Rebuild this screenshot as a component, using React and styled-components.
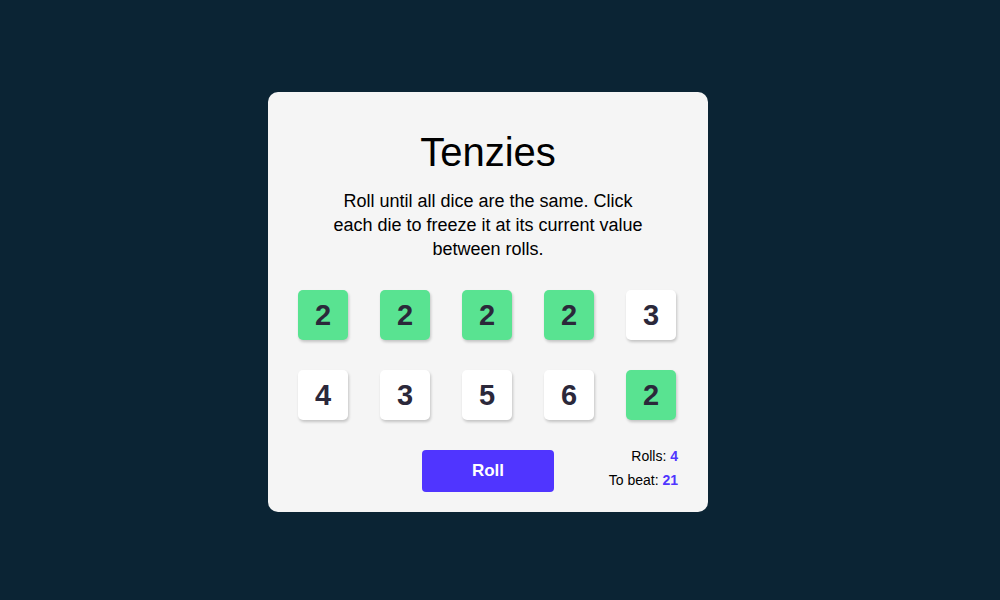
import React from "react";
import styled, { createGlobalStyle } from "styled-components";

const Global = createGlobalStyle`
  html, body { margin: 0; padding: 0; }
  body {
    background: #0b2434;
    font-family: "Liberation Sans", Arial, sans-serif;
  }
`;

const Page = styled.div`
  min-height: 600px;
  box-sizing: border-box;
  padding: 4px 24px 0 0;
  display: flex;
  align-items: center;
  justify-content: center;
`;

const Card = styled.main`
  width: 440px;
  height: 420px;
  box-sizing: border-box;
  background: #f5f5f5;
  border-radius: 10px;
  padding: 38px 30px 20px;
  display: flex;
  flex-direction: column;
  align-items: center;
`;

const Title = styled.h1`
  margin: 0;
  font-size: 40px;
  font-weight: 400;
  color: #000;
`;

const Instructions = styled.p`
  margin: 14px 0 0;
  max-width: 320px;
  text-align: center;
  font-size: 18px;
  line-height: 24px;
  color: #000;
`;

const DiceGrid = styled.div`
  margin-top: 29px;
  align-self: flex-start;
  display: grid;
  grid-template-columns: repeat(5, 50px);
  grid-auto-rows: 50px;
  column-gap: 32px;
  row-gap: 30px;
`;

const Die = styled.button`
  width: 50px;
  height: 50px;
  border: none;
  border-radius: 5px;
  padding: 0;
  background: ${(p) => (p.$held ? "#59e391" : "#ffffff")};
  box-shadow: 1px 2px 3px rgba(0, 0, 0, 0.2);
  font-family: "Liberation Sans", Arial, sans-serif;
  font-size: 29px;
  font-weight: 700;
  color: #2b283a;
  cursor: pointer;
`;

const Footer = styled.div`
  margin-top: 30px;
  width: 100%;
  display: grid;
  grid-template-columns: 1fr auto 1fr;
  align-items: start;
`;

const RollButton = styled.button`
  grid-column: 2;
  width: 132px;
  height: 42px;
  border: none;
  border-radius: 4px;
  background: #5035ff;
  color: #fff;
  font-family: "Liberation Sans", Arial, sans-serif;
  font-size: 17px;
  font-weight: 700;
  cursor: pointer;
`;

const Stats = styled.div`
  grid-column: 3;
  justify-self: end;
  margin-top: -6px;
  text-align: right;
  font-size: 14px;
  line-height: 24px;
  color: #000;
`;

const StatValue = styled.span`
  color: #5035ff;
  font-weight: 700;
`;

const dice = [
  { v: 2, held: true },
  { v: 2, held: true },
  { v: 2, held: true },
  { v: 2, held: true },
  { v: 3, held: false },
  { v: 4, held: false },
  { v: 3, held: false },
  { v: 5, held: false },
  { v: 6, held: false },
  { v: 2, held: true },
];

export default function App() {
  return (
    <>
      <Global />
      <Page>
        <Card>
          <Title>Tenzies</Title>
          <Instructions>
            Roll until all dice are the same. Click each die to freeze it at its
            current value between rolls.
          </Instructions>
          <DiceGrid>
            {dice.map((d, i) => (
              <Die key={i} $held={d.held}>
                {d.v}
              </Die>
            ))}
          </DiceGrid>
          <Footer>
            <RollButton>Roll</RollButton>
            <Stats>
              <div>
                Rolls: <StatValue>4</StatValue>
              </div>
              <div>
                To beat: <StatValue>21</StatValue>
              </div>
            </Stats>
          </Footer>
        </Card>
      </Page>
    </>
  );
}
